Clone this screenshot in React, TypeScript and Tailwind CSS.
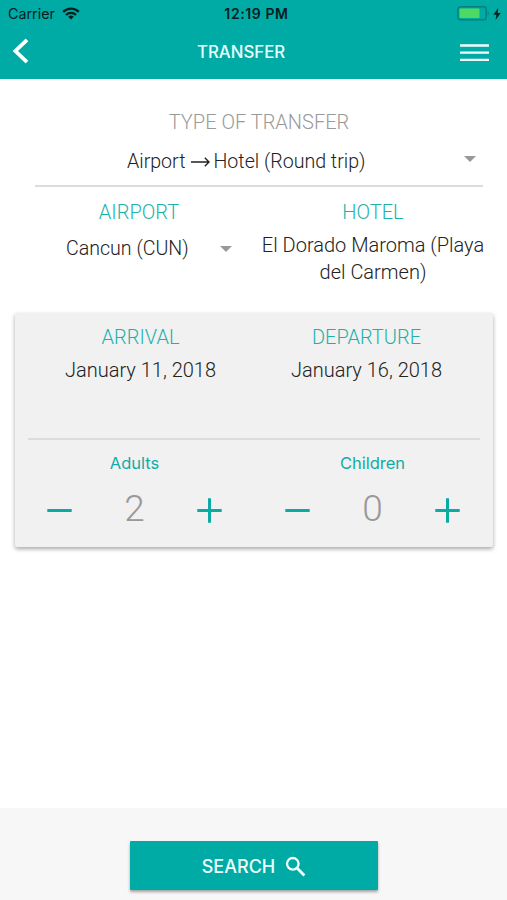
import { useState } from 'react';
import { clsx } from 'clsx';

function WifiIcon() {
  return (
    <svg viewBox="0 0 18 13" className="h-[13px] w-[18px]" fill="none" stroke="#06201f" strokeWidth="2.3">
      <path d="M1.2 4.9a11 11 0 0 1 15.6 0" />
      <path d="M4 8a7 7 0 0 1 10 0" />
      <path d="M9 12.6 6.2 9.8a4 4 0 0 1 5.6 0Z" fill="#06201f" stroke="none" />
    </svg>
  );
}

function StatusBar() {
  return (
    <div className="grid h-[27px] grid-cols-3 items-center text-[#06201f]">
      <div className="flex items-center gap-[7px] pl-[8px]">
        <span className="mt-[1px] text-[14.3px] leading-none">Carrier</span>
        <WifiIcon />
      </div>
      <span className="mt-[1px] pl-1.5 text-center text-[14px] leading-none font-semibold tracking-[0.6px] whitespace-nowrap">
        12:19 PM
      </span>
      <div className="flex items-center justify-end gap-[3px] pr-[6px]">
        <svg viewBox="0 0 33 15" className="h-[15px] w-[33px]">
          <rect x="0.8" y="0.8" width="28.4" height="13" rx="2.6" fill="none" stroke="#087f7b" strokeWidth="1.4" />
          <rect x="2.5" y="2.5" width="20" height="9.6" rx="1" fill="#4cd964" />
          <path d="M30.7 5.2c1.3.4 1.3 3.8 0 4.2Z" fill="#087f7b" />
        </svg>
        <svg viewBox="0 0 8 12" className="h-[12px] w-[8px]">
          <path d="M5.2 0 0.4 6.8h3L2.6 12l5-7H4.6Z" fill="#06201f" />
        </svg>
      </div>
    </div>
  );
}

function Header() {
  return (
    <header className="h-[79px] bg-[#00aba5]">
      <StatusBar />
      <div className="flex h-[52px] items-start pr-[18px] pl-[12px]">
        <button title="Back" className="mt-[11px] w-[30px]">
          <svg viewBox="0 0 17 26" className="h-[26px] w-[17px]" fill="none" stroke="#fff" strokeWidth="3.8">
            <path d="M15 1.8 3.4 13 15 24.2" />
          </svg>
        </button>
        <h1 className="mt-[15px] ml-[155px] flex-1 text-[16.8px] leading-5 font-medium text-[#e9ffff]">TRANSFER</h1>
        <button title="Menu" className="mt-[17px] h-[18px] w-[29px]">
          <svg viewBox="0 0 29 18" className="h-[18px] w-[29px]" stroke="#f2ffff" strokeWidth="2.4">
            <path d="M0 1.5h29M0 8.6h29M0 15.9h29" />
          </svg>
        </button>
      </div>
    </header>
  );
}

function Caret() {
  return (
    <svg viewBox="0 0 12 6" className="h-[6px] w-[12px] shrink-0">
      <path d="M0 0h12L6 6Z" fill="#999" />
    </svg>
  );
}

function Label({ children, className }: { children: string; className?: string }) {
  return (
    <div className={clsx("font-['Roboto'] text-[20px] leading-6 font-light text-[#1cb2ac]", className)}>{children}</div>
  );
}

interface CounterProps {
  label: string;
  initial: number;
}

function Counter({ label, initial }: CounterProps) {
  const [count, setCount] = useState(initial);

  return (
    <div className="flex w-[175px] flex-col items-center">
      <span className="text-[16.5px] leading-5 text-[#0dada7]">{label}</span>
      <div className="mt-[14px] flex h-[46px] w-full items-center justify-between">
        <button title={`Less ${label}`} onClick={() => setCount(Math.max(0, count - 1))}>
          <svg viewBox="0 0 25 25" className="mt-[1px] h-[25px] w-[25px]" stroke="#0aaba5" strokeWidth="3">
            <path d="M0.3 12.5h24.4" />
          </svg>
        </button>
        <span className="-mt-[3px] font-['Roboto'] text-[37px] leading-none font-light text-[#999]">{count}</span>
        <button title={`More ${label}`} onClick={() => setCount(count + 1)}>
          <svg viewBox="0 0 25 25" className="mt-[1px] h-[25px] w-[25px]" stroke="#0aaba5" strokeWidth="3">
            <path d="M0.3 12.5h24.4M12.5 0.3v24.4" />
          </svg>
        </button>
      </div>
    </div>
  );
}

export default function App() {
  return (
    <div className="flex h-[900px] w-[507px] flex-col overflow-hidden bg-white font-['Inter',sans-serif]">
      <Header />

      <main className="flex-1 font-['Roboto',sans-serif] text-[20px] font-light text-[#222]">
        {/* Transfer type */}
        <section className="mx-[35px] flex h-[108px] w-[448px] flex-col items-center border-b-2 border-[#dcdcdc] pt-[31px]">
          <Label className="text-[#999]">TYPE OF TRANSFER</Label>
          <div className="mt-[13px] flex w-full items-center justify-between pr-[7px] pl-[92px]">
            <span className="flex items-center text-[19.6px] leading-[30px] whitespace-nowrap">
              Airport
              <svg viewBox="0 0 19 12" className="mr-[4px] ml-[5px] h-[12px] w-[19px]" fill="none" stroke="#222" strokeWidth="1.4">
                <path d="M0 6h18M13.8 1.8 18 6l-4.2 4.2" />
              </svg>
              Hotel (Round trip)
            </span>
            <span className="-mt-[7px]">
              <Caret />
            </span>
          </div>
        </section>

        {/* Airport and hotel */}
        <section className="flex h-[126px] pt-[13px]">
          <div className="ml-[35px] w-[208px]">
            <Label className="text-center">AIRPORT</Label>
            <div className="mt-[11px] flex items-center justify-between pr-[11px] pl-[31px]">
              <span className="text-[19.6px] leading-[27px]">Cancun (CUN)</span>
              <Caret />
            </div>
          </div>
          <div className="ml-[10px] w-[240px] text-center">
            <Label>HOTEL</Label>
            <div className="mt-[8px] leading-[27px]">El Dorado Maroma (Playa del Carmen)</div>
          </div>
        </section>

        {/* Dates and passengers */}
        <section className="ml-[15px] h-[234px] w-[478px] rounded-[2px] bg-[#f1f1f1] px-[13px] shadow-[0_2px_4px_rgba(0,0,0,0.35)]">
          <div className="flex h-[127px] w-[452px] border-b-2 border-[#dcdcdc] pt-[12px] text-center">
            <div className="w-[225px]">
              <Label>ARRIVAL</Label>
              <div className="mt-[8px] leading-[27px]">January 11, 2018</div>
            </div>
            <div className="w-[227px]">
              <Label>DEPARTURE</Label>
              <div className="mt-[8px] leading-[27px]">January 16, 2018</div>
            </div>
          </div>
          <div className="flex gap-[63px] pt-[13px] pl-[19px] font-['Inter',sans-serif] font-normal">
            <Counter label="Adults" initial={2} />
            <Counter label="Children" initial={0} />
          </div>
        </section>
      </main>

      <footer className="flex h-[92px] justify-center bg-[#f7f7f7] pt-[33px]">
        <button className="flex h-[49px] w-[248px] items-center justify-center gap-[10px] rounded-[1px] bg-[#00aba5] pt-[2px] pl-[1px] text-[18px] font-medium text-[#efffff] shadow-[0_2px_3px_rgba(0,0,0,0.35)]">
          SEARCH
          <svg viewBox="0 0 21 21" className="h-[21px] w-[21px]" fill="none" stroke="#efffff" strokeWidth="2.3">
            <circle cx="7.8" cy="7.8" r="5.8" />
            <path d="m12 12 7.4 7.4" strokeWidth="2.8" />
          </svg>
        </button>
      </footer>
    </div>
  );
}
